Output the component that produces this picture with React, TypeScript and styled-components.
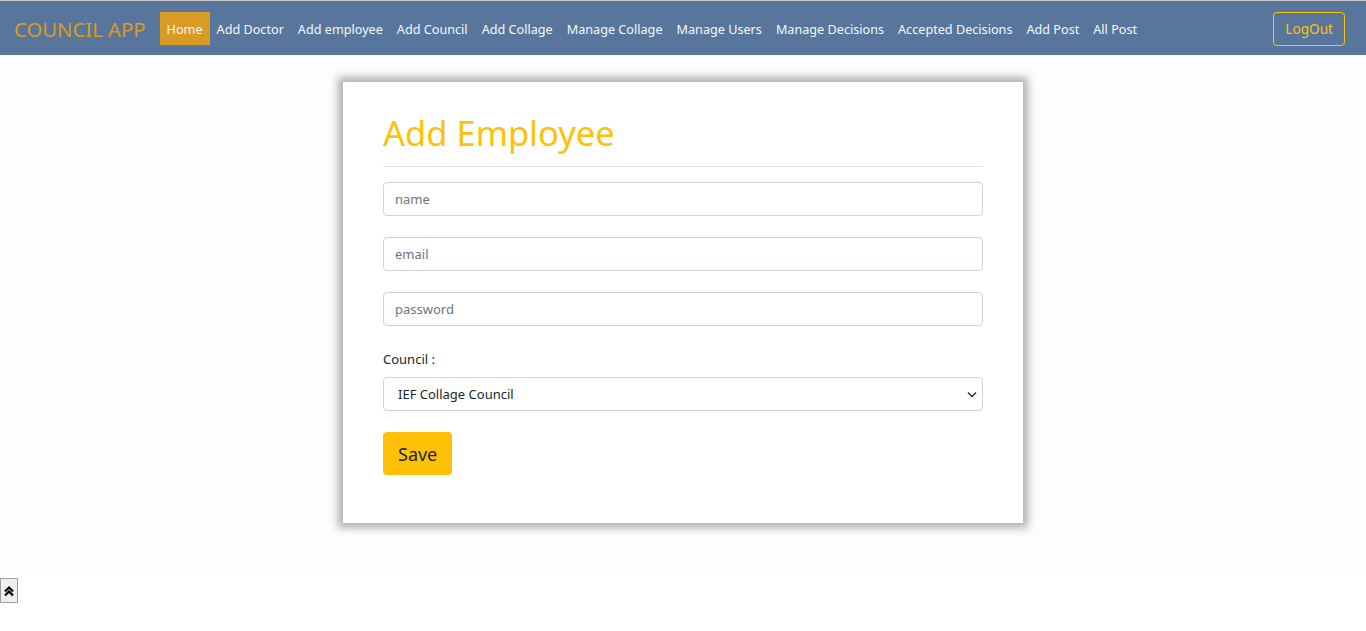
import React from "react";
import styled, { createGlobalStyle } from "styled-components";

const links = [
  "Home",
  "Add Doctor",
  "Add employee",
  "Add Council",
  "Add Collage",
  "Manage Collage",
  "Manage Users",
  "Manage Decisions",
  "Accepted Decisions",
  "Add Post",
  "All Post",
];

const App = () => {
  return (
    <>
      <GlobalStyle />
      <NavBar>
        <Brand>COUNCIL APP</Brand>
        <NavList>
          {links.map((link, i) => (
            <NavItem key={link} $active={i === 0}>
              {link}
            </NavItem>
          ))}
        </NavList>
        <LogoutButton>LogOut</LogoutButton>
      </NavBar>
      <Main>
        <Card>
          <Title>Add Employee</Title>
          <Divider />
          <Form>
            <Input placeholder="name" />
            <Input placeholder="email" />
            <Input placeholder="password" type="password" />
            <Field>
              <Label>Council :</Label>
              <SelectWrap>
                <Select defaultValue="ief">
                  <option value="ief">IEF Collage Council</option>
                </Select>
                <Chevron width="10" height="7" viewBox="0 0 10 7">
                  <path d="M1 1.5 L5 5.5 L9 1.5" fill="none" stroke="#343a40" strokeWidth="1.6" />
                </Chevron>
              </SelectWrap>
            </Field>
            <SaveButton>Save</SaveButton>
          </Form>
        </Card>
      </Main>
      <ScrollTop aria-label="scroll to top">
        <svg width="10" height="12" viewBox="0 0 10 12">
          <path
            d="M1 6.5 L5 2.5 L9 6.5 M1 10.5 L5 6.5 L9 10.5"
            fill="none"
            stroke="#000"
            strokeWidth="2.2"
          />
        </svg>
      </ScrollTop>
    </>
  );
};

export default App;

const GlobalStyle = createGlobalStyle`
  body {
    margin: 0;
    background: #fff;
    font-family: "Noto Sans", "Open Sans", sans-serif;
    color: #212529;
  }
  * { box-sizing: border-box; }
`;

const NavBar = styled.nav`
  display: flex;
  align-items: center;
  height: 55px;
  border-top: 1px solid #c6c6c6;
  background: #58769b;
  padding: 1px 21px 0 14px;
`;

const Brand = styled.div`
  font-size: 20.3px;
  color: #d99b22;
  margin-right: 14px;
`;

const NavList = styled.div`
  display: flex;
  flex: 1;
  align-items: center;
`;

const NavItem = styled.a<{ $active?: boolean }>`
  display: flex;
  align-items: center;
  height: 33px;
  padding: 0 7px;
  font-size: 12.65px;
  color: #f4f6f9;
  background: ${({ $active }) => ($active ? "#d89b24" : "transparent")};
  cursor: pointer;
  white-space: nowrap;
`;

const LogoutButton = styled.button`
  height: 34px;
  padding: 0 11px;
  border: 1px solid #ffc107;
  border-radius: 4px;
  background: transparent;
  color: #ffc107;
  font-family: inherit;
  font-size: 13.6px;
`;

const Main = styled.main`
  display: flex;
  justify-content: center;
  background: #fdfdfd;
  padding: 27px 0 52px;
`;

const Card = styled.div`
  width: 680px;
  background: #fff;
  padding: 28px 40px 48px;
  box-shadow: 0 0 8px 5px rgba(0, 0, 0, 0.3);
`;

const Title = styled.h1`
  margin: 0;
  font-size: 34.5px;
  font-weight: 400;
  line-height: 46px;
  color: #ffc107;
`;

const Divider = styled.hr`
  margin: 10px 0 15px;
  border: 0;
  border-top: 1px solid #dee2e6;
`;

const Form = styled.div`
  display: flex;
  flex-direction: column;
  align-items: flex-start;
  gap: 21px;
`;

const Input = styled.input`
  width: 100%;
  height: 34px;
  padding: 0 11px;
  border: 1px solid #ced4da;
  border-radius: 4px;
  font-family: inherit;
  font-size: 13px;
  color: #212529;
  &::placeholder {
    color: #6c757d;
  }
`;

const Field = styled.div`
  display: flex;
  flex-direction: column;
  width: 100%;
  gap: 9px;
  padding-top: 3px;
`;

const Label = styled.label`
  font-size: 13px;
  color: #212529;
`;

const SelectWrap = styled.div`
  position: relative;
  width: 100%;
`;

const Select = styled.select`
  width: 100%;
  height: 34px;
  padding: 0 14px;
  border: 1px solid #ced4da;
  border-radius: 4px;
  background: #fff;
  font-family: inherit;
  font-size: 13px;
  color: #212529;
  appearance: none;
`;

const Chevron = styled.svg`
  position: absolute;
  right: 6px;
  top: 14px;
  pointer-events: none;
`;

const SaveButton = styled.button`
  height: 43px;
  padding: 0 15px;
  border: 0;
  border-radius: 4px;
  background: #ffc107;
  color: #212529;
  font-family: inherit;
  font-size: 18px;
`;

const ScrollTop = styled.button`
  display: flex;
  align-items: center;
  justify-content: center;
  width: 18px;
  height: 25px;
  margin-top: 3px;
  padding: 0;
  border: 1px solid #a0a0a0;
  background: #efefef;
`;
